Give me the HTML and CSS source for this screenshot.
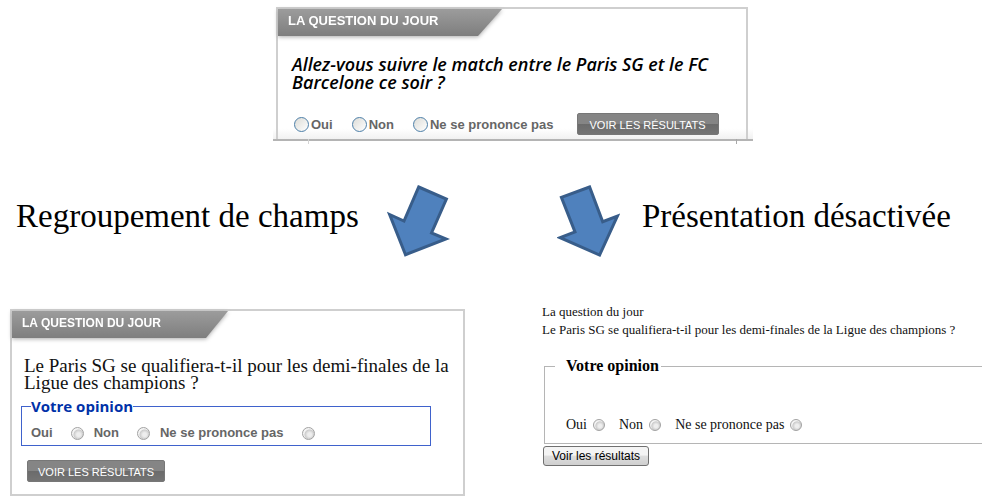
FILE: index.html
```html
<!DOCTYPE html>
<html lang="fr">
<head>
<meta charset="utf-8">
<title>Regroupement de champs</title>
<link rel="stylesheet" href="styles.css">
</head>
<body>
<main class="page">
  <section class="source">
    <div class="sheet">
      <form class="card card-cut">
        <h2 class="tab tab-large"><span>LA QUESTION DU JOUR</span></h2>
        <p class="question">Allez-vous suivre le match entre le Paris SG et le FC Barcelone ce soir ?</p>
        <div class="choices">
          <label><input class="radio radio-blue" type="radio" name="match">Oui</label>
          <label><input class="radio radio-blue" type="radio" name="match">Non</label>
          <label><input class="radio radio-blue" type="radio" name="match">Ne se prononce pas</label>
          <button class="button" type="button">VOIR LES RÉSULTATS</button>
        </div>
      </form>
    </div>
  </section>

  <section class="captions">
    <h1 class="caption">Regroupement de champs</h1>
    <svg class="arrow" viewBox="387 182 63 78" aria-hidden="true">
      <polygon points="418.7,187 446.4,199 431.5,233 446,239 405.5,254.7 389.6,214.5 404,221"/>
    </svg>
    <svg class="arrow arrow-right" viewBox="557 182 63 78" aria-hidden="true">
      <polygon points="589.6,187 561.4,197.4 575,232 560.2,237.7 599.6,255 617.4,216 602.7,221.7"/>
    </svg>
    <h1 class="caption caption-right">Présentation désactivée</h1>
  </section>

  <section class="results">
    <form class="card card-full">
      <h2 class="tab"><span>LA QUESTION DU JOUR</span></h2>
      <p class="question-plain">Le Paris SG se qualifiera-t-il pour les demi-finales de la Ligue des champions ?</p>
      <fieldset class="group">
        <legend>Votre opinion</legend>
        <div class="group-row">
          <label>Oui<input class="radio radio-gray" type="radio" name="psg"></label>
          <label>Non<input class="radio radio-gray" type="radio" name="psg"></label>
          <label>Ne se prononce pas<input class="radio radio-gray" type="radio" name="psg"></label>
        </div>
      </fieldset>
      <button class="button button-small" type="button">VOIR LES RÉSULTATS</button>
    </form>

    <form class="plain">
      <p>La question du jour</p>
      <p>Le Paris SG se qualifiera-t-il pour les demi-finales de la Ligue des champions ?</p>
      <fieldset class="plain-group">
        <legend>Votre opinion</legend>
        <div class="plain-row">
          <label>Oui<input class="radio radio-small" type="radio" name="plain"></label>
          <label>Non<input class="radio radio-small" type="radio" name="plain"></label>
          <label>Ne se prononce pas<input class="radio radio-small" type="radio" name="plain"></label>
        </div>
      </fieldset>
      <button class="native" type="button">Voir les résultats</button>
    </form>
  </section>
</main>
</body>
</html>
```
FILE: styles.css
```css
* {
  box-sizing: border-box;
}

body,
h1,
h2,
p {
  margin: 0;
}

body {
  background: #fff;
  color: #000;
  font-family: "Liberation Sans", Arial, sans-serif;
}

.page {
  padding-top: 7px;
}

/* Original form */
.source {
  display: grid;
  grid-template-columns: 273fr 480fr 244fr;
}

.sheet {
  position: relative;
  grid-column: 2;
  padding: 0 5px 0 3px;
  border-bottom: 2px solid #b4b4b4;
  background: linear-gradient(#fff 92%, #f1f1f1);
}

/* Short ticks under the torn edge */
.sheet::before,
.sheet::after {
  content: "";
  position: absolute;
  top: 100%;
  left: 35px;
  width: 1px;
  height: 5px;
  background: #d4d4d4;
}

.sheet::after {
  right: 16px;
  left: auto;
  background: #a8a8a8;
}

.card {
  border: 2px solid #cfcfcf;
}

.card-cut {
  border-bottom: 0;
  padding-bottom: 4px;
}

.tab {
  filter: drop-shadow(0 1px 2px #aaa);
  color: #fff;
  font-size: 12px;
  line-height: 24px;
}

.tab span {
  display: block;
  width: 216px;
  height: 27px;
  padding-left: 10px;
  background: linear-gradient(#9c9c9c, #7e7e7e);
  clip-path: polygon(0 0, 100% 0, 194px 100%, 0 100%);
}

.tab-large {
  font-size: 13px;
}

.tab-large span {
  width: 224px;
  clip-path: polygon(0 0, 100% 0, 200px 100%, 0 100%);
}

.question {
  padding: 19px 30px 0 14px;
  font-family: "Open Sans", sans-serif;
  font-size: 18px;
  font-style: italic;
  font-weight: 600;
  line-height: 18px;
}

.choices {
  display: flex;
  align-items: center;
  gap: 19px;
  padding: 22px 0 0 16px;
  color: #666;
  font-size: 13px;
  font-weight: bold;
  white-space: nowrap;
}

.choices label {
  display: flex;
  align-items: center;
  gap: 2px;
}

.choices .button {
  margin-left: 4px;
}

.radio {
  appearance: none;
  flex: none;
  margin: 0;
  border-radius: 50%;
}

.radio-blue {
  width: 15px;
  height: 15px;
  border: 1px solid #4d7fa8;
  background: linear-gradient(135deg, #dcdcd7, #fff);
}

.radio-gray,
.radio-small {
  width: 13px;
  height: 13px;
  border: 1px solid #a2a2a2;
  background: radial-gradient(circle at 60% 60%, #eee 20%, #ccc 50%, #f4f4f4 60%);
}

.radio-small {
  width: 12px;
  height: 12px;
}

.button {
  height: 22px;
  padding: 2px 12px 0;
  border: 1px solid #777;
  border-radius: 2px;
  background: linear-gradient(#858585 50%, #6b6b6b 50%, #747474);
  color: #fff;
  font-family: inherit;
  font-size: 11px;
  white-space: nowrap;
}

/* Captions and arrows */
.captions {
  display: grid;
  grid-template-columns: 387fr 63fr 107fr 63fr 377fr;
  align-items: center;
  margin-top: 41px;
}

.caption {
  padding: 0 0 10px 16px;
  font-family: "Palatino Linotype", "Book Antiqua", "Liberation Serif", serif;
  font-size: 33px;
  font-weight: normal;
  line-height: 36px;
  white-space: nowrap;
}

.caption-right {
  padding-left: 22px;
}

.arrow {
  width: 100%;
  fill: #4f81bd;
  stroke: #385d8a;
  stroke-width: 3;
}

.arrow-right {
  grid-column: 4;
}

/* Resulting forms */
.results {
  display: grid;
  grid-template-columns: 455fr 440fr;
  align-items: start;
  gap: 77px;
  margin-top: 43px;
  padding: 0 15px 0 10px;
}

.card-full {
  margin-top: 6px;
  padding-bottom: 12px;
}

.question-plain {
  padding: 19px 8px 0 12px;
  color: #111;
  font-family: "Liberation Serif", serif;
  font-size: 19px;
  line-height: 17px;
}

.group {
  margin: 7px 32px 14px 9px;
  padding: 0 9px 4px;
  border: 1px solid #3f62cc;
}

.group legend {
  padding: 0;
  color: #0031a8;
  font-family: "Open Sans", sans-serif;
  font-size: 15px;
  font-weight: bold;
  line-height: 16px;
}

.group-row {
  display: flex;
  gap: 10px;
  padding-top: 11px;
  color: #666;
  font-size: 13px;
  font-weight: bold;
  line-height: 16px;
}

.group-row label {
  display: flex;
  align-items: center;
  gap: 18px;
}

.button-small {
  display: block;
  margin-left: 15px;
  padding: 2px 10px 0;
}

.plain {
  color: #111;
  font-family: "Liberation Serif", serif;
  font-size: 13px;
  line-height: 18px;
  white-space: nowrap;
}

.plain-group {
  margin: 18px 0 0 2px;
  padding: 0 0 9px 10px;
  border: 1px solid #b5b5b5;
  border-right: 0;
}

.plain-group legend {
  padding: 0 2px 0 11px;
  color: #000;
  font-size: 16px;
  font-weight: bold;
}

.plain-row {
  display: flex;
  gap: 14px;
  padding: 41px 0 0 11px;
  font-size: 14px;
}

.plain-row label {
  display: flex;
  align-items: center;
  gap: 6px;
}

.native {
  display: block;
  height: 20px;
  margin: 2px 0 0 1px;
  padding: 0 8px;
  border: 1px solid #707070;
  border-radius: 3px;
  background: linear-gradient(#f4f4f4 45%, #dedede 50%, #cfcfcf);
  color: #000;
  font-family: "Liberation Sans", Arial, sans-serif;
  font-size: 12px;
}
```
